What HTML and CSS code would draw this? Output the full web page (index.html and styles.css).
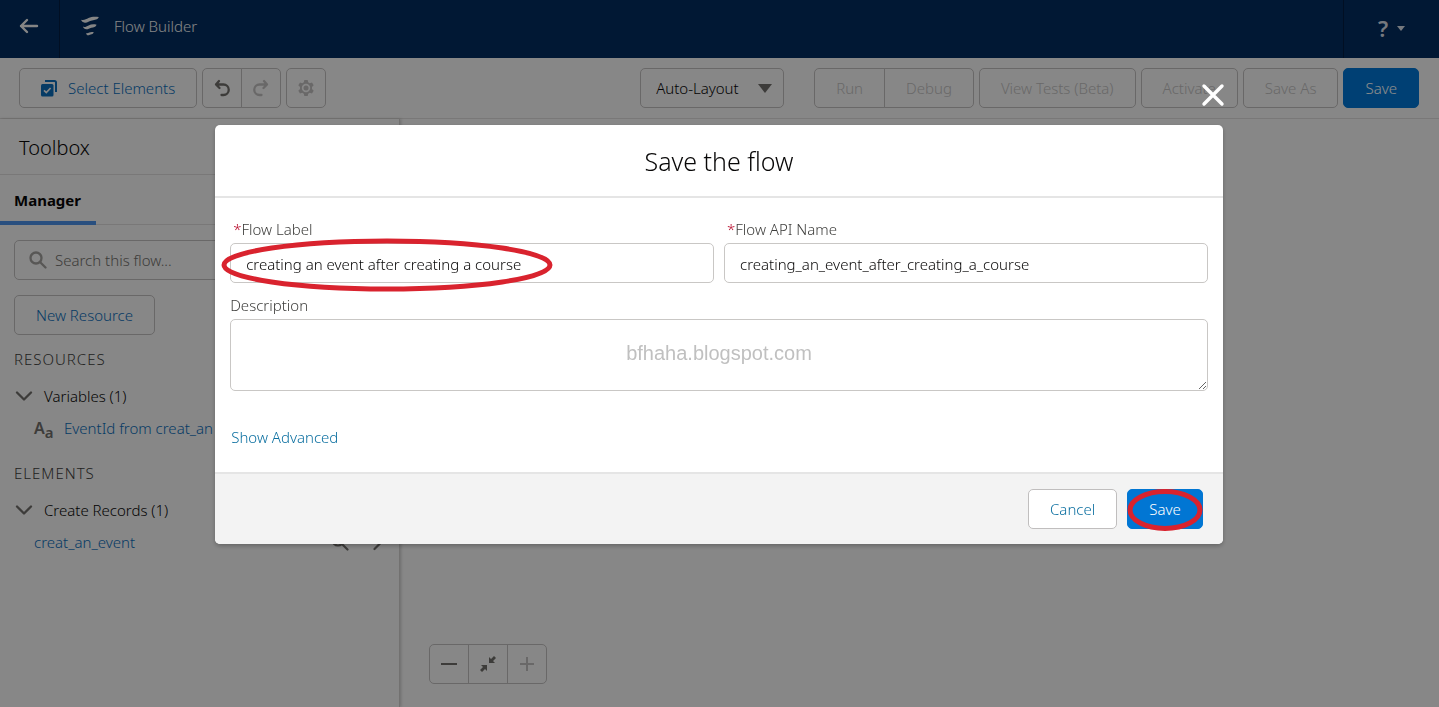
FILE: index.html
```html
<!DOCTYPE html>
<html lang="en">
<head>
<meta charset="utf-8">
<title>Flow Builder</title>
<link rel="stylesheet" href="styles.css">
</head>
<body>
<div class="app">
  <header class="topbar">
    <a class="topbar-back" href="#" aria-label="Back">
      <svg width="20" height="18" viewBox="0 0 20 18" fill="none" stroke="currentColor" stroke-width="2.4" stroke-linecap="round" stroke-linejoin="round"><path d="M18 9H2M8 3L2 9l6 6"/></svg>
    </a>
    <div class="topbar-title">
      <svg width="20" height="20" viewBox="0 0 20 20" fill="currentColor"><path d="M1 3.800C4 4.600 6 3.400 8.500 2.100 11.500.6 15 .4 18.800 1.100 17.600 4 14.800 3.900 12 4.500 9 5.200 7.500 6.900 4.800 6.700 2.800 6.500 1.600 5.400 1 3.800z"/><path d="M3 10.800c2.200.5 3.600-.4 5.600-1.400 2.300-1.100 5-1.300 8-.7-.9 2.500-3 2.500-5.200 3-2.200.5-3.200 1.700-5.100 1.600-1.700-.1-2.700-1.100-3.300-2.500z"/><path d="M6 17.200c1.400.4 2.200-.2 3.300-.7 1.400-.6 2.800-.7 4.500-.3-.7 1.900-1.900 1.900-3.100 2.200-1.200.3-1.500.9-2.600.9-1.100-.1-1.700-.9-2.100-2.100z"/></svg>
      <span>Flow Builder</span>
    </div>
    <button class="topbar-help" type="button" aria-label="Help">
      <span class="help-mark">?</span>
      <svg width="8" height="5" viewBox="0 0 8 5" fill="currentColor"><path d="M0 0h8L4 5z"/></svg>
    </button>
  </header>

  <div class="toolbar">
    <button class="btn btn-brand-text btn-select" type="button">
      <svg width="18" height="18" viewBox="0 0 18 18"><path d="M5 2h9.500A1.500 1.500 0 0 1 16 3.500V13" fill="none" stroke="currentColor" stroke-width="2"/><rect x="1" y="5" width="12.500" height="12.500" rx="1.500" fill="currentColor"/><path d="M4 11.300l2.300 2.300L10.600 9" fill="none" stroke="#f3f3f3" stroke-width="1.700"/></svg>
      Select Elements
    </button>
    <div class="group">
      <button class="btn btn-icon" type="button" aria-label="Undo"><svg width="18" height="18" viewBox="0 0 18 18" fill="none" stroke="currentColor" stroke-width="2.300" stroke-linecap="round" stroke-linejoin="round"><path d="M6 2L3 5.500 6.500 9M3 5.500h7.500a4.800 4.800 0 0 1 0 10.500H8.500"/></svg></button>
      <button class="btn btn-icon" type="button" aria-label="Redo" disabled><svg width="18" height="18" viewBox="0 0 18 18" fill="none" stroke="currentColor" stroke-width="2.300" stroke-linecap="round" stroke-linejoin="round"><path d="M12 2l3 3.500L11.500 9M15 5.500H7.500a4.800 4.800 0 0 0 0 10.500H9.500"/></svg></button>
    </div>
    <button class="btn btn-icon" type="button" aria-label="Settings" disabled>
      <svg width="18" height="18" viewBox="0 0 18 18"><path fill="currentColor" fill-rule="evenodd" d="M7.300 1h3.400l.5 2.300 1.500.9 2.300-.8 1.700 2.900L15 7.900v2.200l1.700 1.600-1.700 2.900-2.300-.8-1.500.9-.5 2.300H7.300l-.5-2.300-1.500-.9-2.300.8-1.700-2.900L3 10.100V7.900L1.300 6.300 3 3.400l2.300.8 1.500-.9zM9 4.800a4.200 4.200 0 1 0 0 8.400 4.200 4.200 0 0 0 0-8.400z"/><circle cx="9" cy="9" r="2.500" fill="currentColor"/></svg>
    </button>
    <div class="layout-picker">
      <select class="btn layout-select" aria-label="Layout mode"><option>Auto-Layout</option></select>
      <svg class="layout-arrow" width="14" height="9" viewBox="0 0 14 9" fill="currentColor"><path d="M0 0h14L7 9z"/></svg>
    </div>
    <div class="group">
      <button class="btn" type="button" disabled>Run</button>
      <button class="btn" type="button" disabled>Debug</button>
    </div>
    <button class="btn" type="button" disabled>View Tests (Beta)</button>
    <button class="btn" type="button" disabled>Activate</button>
    <button class="btn" type="button" disabled>Save As</button>
    <button class="btn btn-primary" type="button">Save</button>
  </div>

  <div class="workspace">
    <aside class="toolbox">
      <h2 class="toolbox-title">Toolbox</h2>
      <div class="tabs"><button class="tab" type="button">Manager</button></div>
      <div class="toolbox-body">
        <div class="search">
          <svg width="18" height="18" viewBox="0 0 18 18" fill="none" stroke="currentColor" stroke-width="2.300" stroke-linecap="round"><circle cx="7" cy="7" r="5.500"/><path d="M11.200 11.200L16.500 16.500"/></svg>
          <input class="search-input" type="text" placeholder="Search this flow..." aria-label="Search this flow">
        </div>
        <button class="btn btn-brand-text" type="button">New Resource</button>
        <h3 class="section-title">RESOURCES</h3>
        <button class="branch" type="button"><svg width="18" height="10" viewBox="0 0 18 10" fill="none" stroke="currentColor" stroke-width="2.300" stroke-linecap="round" stroke-linejoin="round"><path d="M2 1.500l7 7 7-7"/></svg>Variables (1)</button>
        <div class="leaf">
          <span class="type-icon" aria-hidden="true"><span class="type-big">A</span><span class="type-small">a</span></span>
          <a class="link" href="#">EventId from creat_an</a>
        </div>
        <h3 class="section-title">ELEMENTS</h3>
        <button class="branch" type="button"><svg width="18" height="10" viewBox="0 0 18 10" fill="none" stroke="currentColor" stroke-width="2.300" stroke-linecap="round" stroke-linejoin="round"><path d="M2 1.500l7 7 7-7"/></svg>Create Records (1)</button>
        <div class="leaf">
          <a class="link" href="#">creat_an_event</a>
          <span class="leaf-actions">
            <svg width="18" height="18" viewBox="0 0 18 18" fill="none" stroke="currentColor" stroke-width="2.200" stroke-linecap="round"><circle cx="7" cy="7" r="5.500"/><path d="M11.200 11.200L16.500 16.500"/></svg>
            <svg width="10" height="18" viewBox="0 0 10 18" fill="none" stroke="currentColor" stroke-width="2.200" stroke-linecap="round" stroke-linejoin="round"><path d="M1.500 2l7 7-7 7"/></svg>
          </span>
        </div>
      </div>
    </aside>
    <main class="canvas">
      <div class="group">
        <button class="btn btn-icon" type="button" aria-label="Zoom out"><svg width="16" height="16" viewBox="0 0 16 16" stroke="currentColor" stroke-width="2"><path d="M0 8h16"/></svg></button>
        <button class="btn btn-icon" type="button" aria-label="Zoom to fit"><svg width="16" height="16" viewBox="0 0 16 16" fill="currentColor"><path d="M9 1v6h6l-2-2 3-3-2-2-3 3zM7 15V9H1l2 2-3 3 2 2 3-3z"/></svg></button>
        <button class="btn btn-icon" type="button" aria-label="Zoom in" disabled><svg width="16" height="16" viewBox="0 0 16 16" stroke="currentColor" stroke-width="2"><path d="M1 8h14M8 1v14"/></svg></button>
      </div>
    </main>
  </div>
</div>

<div class="backdrop">
  <section class="modal" role="dialog" aria-labelledby="modal-title">
    <button class="modal-close" type="button" aria-label="Close"><svg width="24" height="24" viewBox="0 0 24 24" fill="none" stroke="currentColor" stroke-width="3.400" stroke-linecap="round"><path d="M3 3l18 18M21 3L3 21"/></svg></button>
    <header class="modal-header"><h1 class="modal-title" id="modal-title">Save the flow</h1></header>
    <div class="modal-body">
      <div class="field-row">
        <div class="field marked">
          <label class="label label-required" for="flow-label"><span class="required">*</span>Flow Label</label>
          <input class="input" id="flow-label" type="text" value="creating an event after creating a course">
          <svg class="mark mark-label" width="332" height="54" viewBox="0 0 332 54" fill="none" stroke="#d9232e" stroke-width="5"><ellipse cx="166" cy="27" rx="163" ry="24"/></svg>
        </div>
        <div class="field">
          <label class="label label-required" for="api-name"><span class="required">*</span>Flow API Name</label>
          <input class="input" id="api-name" type="text" value="creating_an_event_after_creating_a_course">
        </div>
      </div>
      <div class="field marked">
        <label class="label" for="description">Description</label>
        <textarea class="input textarea" id="description"></textarea>
        <span class="watermark">bfhaha.blogspot.com</span>
      </div>
      <a class="link advanced" href="#">Show Advanced</a>
    </div>
    <footer class="modal-footer">
      <button class="btn btn-plain" type="button">Cancel</button>
      <div class="marked">
        <button class="btn btn-primary" type="button">Save</button>
        <svg class="mark mark-save" width="76" height="42" viewBox="0 0 76 42" fill="none" stroke="#d9232e" stroke-width="5"><ellipse cx="38" cy="21" rx="35" ry="18.500"/></svg>
      </div>
    </footer>
  </section>
</div>
</body>
</html>
```
FILE: styles.css
```css
* { box-sizing: border-box; }
body {
  margin: 0;
  font-family: "Noto Sans", "Open Sans", sans-serif;
  font-size: 15px;
  font-weight: 300;
  line-height: 20px;
  color: #080707;
}
button, input, select, textarea { font: inherit; color: inherit; }
svg { flex: none; display: block; }
h1, h2, h3 { margin: 0; font-weight: 300; }

.app { display: flex; flex-direction: column; height: 100vh; background: #f6f6f6; overflow: hidden; }

.topbar { display: flex; flex: none; height: 58px; background: #032d60; color: #f3f3f3; }
.topbar-back { display: flex; align-items: center; width: 60px; padding: 0 0 6px 19px; border-right: 1px solid #021c40; color: inherit; }
.topbar-title { display: flex; flex: 1; align-items: center; gap: 14px; padding: 0 20px 6px; }
.topbar-help { display: flex; align-items: center; gap: 9px; width: 96px; padding: 0 0 2px 34px; border: 0; border-left: 1px solid #021c40; background: none; color: #d8dde6; }
.help-mark { font-size: 22px; font-weight: 600; line-height: 24px; }

.toolbar { display: flex; flex: none; align-items: center; gap: 5px; padding: 10px 20px 10px 19px; border-bottom: 1px solid #dddbda; }
.btn {
  display: flex; align-items: center; justify-content: center;
  height: 40px; padding: 0 21px;
  border: 1px solid #c0bebe; border-radius: 5px;
  background: transparent; white-space: nowrap;
}
.btn:disabled { color: #c0bebe; }
.btn-brand-text { color: #0b6cb8; }
.btn-select { gap: 10px; padding: 0 21px 0 20px; }
.btn-primary { border-color: #0176d3; background: #0176d3; color: #fff; }
.btn-plain { background: #fff; color: #0b6fa0; }
.btn-icon { width: 40px; padding: 0; color: #706e6b; }
.group { display: flex; }
.group .btn { border-radius: 0; }
.group .btn + .btn { margin-left: -1px; }
.group .btn:first-child { border-radius: 5px 0 0 5px; }
.group .btn:last-child { border-radius: 0 5px 5px 0; }
.layout-picker { position: relative; margin: 0 25px 0 auto; }
.layout-select { width: 144px; padding: 0 15px; appearance: none; }
.layout-arrow { position: absolute; right: 12px; top: 16px; color: #706e6b; pointer-events: none; }

.workspace { display: flex; flex: 1; min-height: 0; }
.toolbox { width: 400px; flex: none; border-right: 1px solid #d0cecd; box-shadow: 1px 0 3px rgba(0, 0, 0, .2); }
.toolbox-title { padding: 19px 19px 16px; border-bottom: 1px solid #dddbda; font-size: 20px; }
.tabs { display: flex; border-bottom: 1px solid #dddbda; }
.tab { height: 50px; margin-bottom: -1px; padding: 4px 15px 0 14px; border: 0; border-bottom: 4px solid #4c90e8; background: none; font-weight: 700; }
.toolbox-body { padding: 15px 14px; }
.search { display: flex; align-items: center; gap: 8px; height: 40px; margin-bottom: 15px; padding: 0 14px; border: 1px solid #c0bebe; border-radius: 5px; color: #a09e9c; }
.search-input { flex: 1; padding: 0; border: 0; background: none; outline: 0; }
.search-input::placeholder { color: #706e6b; }
.section-title { margin: 14px 0 17px; color: #3e3e3c; font-size: 15px; letter-spacing: 1px; }
.branch { display: flex; align-items: center; gap: 11px; margin-bottom: 12px; padding: 0 1px; border: 0; background: none; }
.branch svg, .leaf-actions { color: #706e6b; }
.leaf { display: flex; align-items: center; gap: 10px; height: 20px; margin-bottom: 25px; padding-left: 20px; white-space: nowrap; }
.leaf-actions { display: flex; gap: 24px; margin-left: auto; padding-right: 2px; }
.type-icon { display: flex; align-items: center; width: 20px; color: #706e6b; font-weight: 600; }
.type-big { font-size: 16px; line-height: 16px; }
.type-small { padding-top: 8px; font-size: 15px; line-height: 16px; }
.link { color: #0b6cb8; text-decoration: none; }

.canvas { display: flex; flex: 1; align-items: flex-end; padding: 0 29px 23px; }

.backdrop { position: fixed; inset: 0; display: flex; align-items: flex-start; justify-content: center; padding: 125px 1px 0 0; background: rgba(0, 0, 0, .45); }
.modal { position: relative; width: calc(70% + 1px); border-radius: 5px; background: #fff; box-shadow: 0 2px 4px rgba(0, 0, 0, .25); }
.modal-close { position: absolute; right: -2px; top: -42px; padding: 0; border: 0; background: none; color: #fff; }
.modal-header { padding: 21px 15px 20px; border-bottom: 2px solid #e5e5e5; text-align: center; }
.modal-title { font-size: 25px; line-height: 30px; }
.modal-body { display: flex; flex-direction: column; gap: 12px; padding: 21px 15px 25px; }
.field-row { display: grid; grid-template-columns: 1fr 1fr; gap: 10px; }
.field { display: flex; flex-direction: column; gap: 4px; }
.label { color: #3e3e3c; }
.label-required { padding-left: 3px; }
.required { color: #b80c2c; }
.input { width: 100%; height: 40px; padding: 2px 15px 0; border: 1px solid #c9c7c5; border-radius: 5px; background: #fff; outline: 0; }
.textarea { height: 72px; resize: vertical; }
.marked { position: relative; }
.mark { position: absolute; pointer-events: none; }
.mark-label { left: -9px; bottom: -9px; }
.mark-save { left: 0; top: 0; }
.watermark { position: absolute; left: 0; right: 0; bottom: 28px; text-align: center; color: #c0c0c0; font: 20px/20px "Liberation Sans", Arial, sans-serif; pointer-events: none; }
.advanced { align-self: flex-start; margin-top: 24px; padding-left: 1px; color: #0b6fa0; }
.modal-footer { display: flex; justify-content: flex-end; gap: 10px; padding: 15px 20px; border-top: 2px solid #e5e5e5; border-radius: 0 0 5px 5px; background: #f3f3f3; }
```
